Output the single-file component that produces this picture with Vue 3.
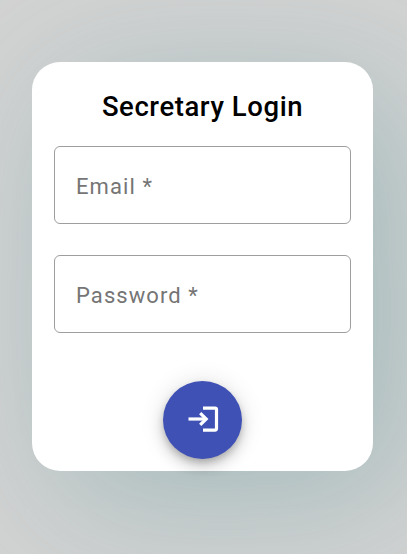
<script setup>
const fields = [
  { id: 'email', label: 'Email *' },
  { id: 'password', label: 'Password *' },
]
</script>

<template>
  <main class="page">
    <form class="card" @submit.prevent>
      <h1 class="title">Secretary Login</h1>
      <div class="fields">
        <div v-for="field in fields" :key="field.id" class="field">
          <span class="label">{{ field.label }}</span>
        </div>
      </div>
      <button class="submit" type="submit">
        <svg class="icon" viewBox="0 0 32 30" fill="none" stroke="#fff" stroke-width="3.2">
          <path d="M1.5 15H19" />
          <path d="M13.2 9.1L19.2 15L13.2 20.9" />
          <path d="M16 4.1H28Q29.5 4.1 29.5 5.6V24.6Q29.5 26.1 28 26.1H16" />
        </svg>
      </button>
    </form>
  </main>
</template>

<style>
body {
  background: #d3d3d3;
}
</style>

<style scoped>
.page {
  box-sizing: border-box;
  height: 554px;
  padding: 62px 34px 0 32px;
  overflow: hidden;
  font-family: Roboto, sans-serif;
}

.card {
  box-sizing: border-box;
  display: flex;
  flex-direction: column;
  align-items: center;
  height: 409px;
  padding: 26px 22px 0;
  border-radius: 28px;
  background: #fff;
  box-shadow: 27px 27px 140px rgba(95, 150, 152, 0.41);
}

.title {
  margin: 0;
  font-size: 27.5px;
  font-weight: 500;
  line-height: 38px;
  letter-spacing: 0.58px;
  color: #000;
}

.fields {
  display: flex;
  flex-direction: column;
  gap: 31px;
  align-self: stretch;
  margin-top: 20px;
}

.field {
  box-sizing: border-box;
  display: flex;
  align-items: center;
  height: 78px;
  padding: 4px 21px 0;
  border: 1px solid #9e9e9e;
  border-radius: 6px;
}

.label {
  font-size: 22px;
  line-height: 26px;
  letter-spacing: 1.08px;
  color: #757575;
}

.submit {
  display: flex;
  align-items: center;
  justify-content: center;
  width: 79px;
  height: 78px;
  margin: 48px 0 0;
  padding: 0 0 2px;
  border: 0;
  border-radius: 50%;
  background: #3f51b5;
  box-shadow:
    0 4px 7px -1px rgba(0, 0, 0, 0.2),
    0 8px 14px 0 rgba(0, 0, 0, 0.14),
    0 1px 25px 0 rgba(0, 0, 0, 0.12);
}

.icon {
  width: 32px;
  height: 30px;
}
</style>
